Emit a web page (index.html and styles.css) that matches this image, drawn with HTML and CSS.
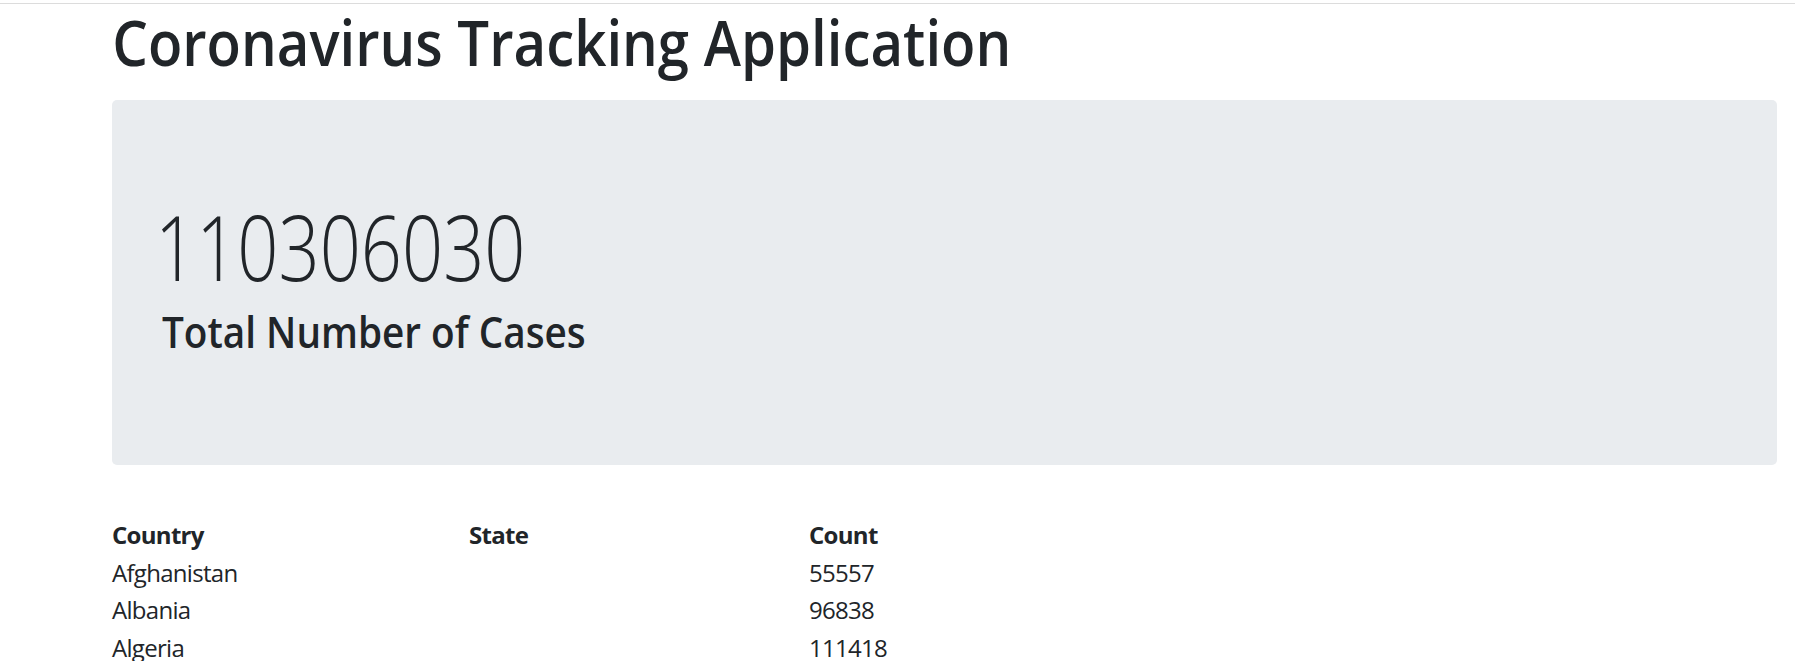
FILE: index.html
```html
<!DOCTYPE html>
<html lang="en">
<head>
<meta charset="utf-8">
<title>Coronavirus Tracking Application</title>
<link rel="stylesheet" href="styles.css">
</head>
<body>
<div class="topline"></div>
<main class="container">
  <h1 class="title">Coronavirus Tracking Application</h1>
  <section class="jumbotron">
    <div class="total">110306030</div>
    <h3 class="total-label">Total Number of Cases</h3>
  </section>
  <div class="cases">
    <div class="row head">
      <div class="cell">Country</div>
      <div class="cell">State</div>
      <div class="cell">Count</div>
    </div>
    <div class="row">
      <div class="cell">Afghanistan</div>
      <div class="cell"></div>
      <div class="cell">55557</div>
    </div>
    <div class="row">
      <div class="cell">Albania</div>
      <div class="cell"></div>
      <div class="cell">96838</div>
    </div>
    <div class="row">
      <div class="cell">Algeria</div>
      <div class="cell"></div>
      <div class="cell">111418</div>
    </div>
  </div>
</main>
</body>
</html>
```
FILE: styles.css
```css
html {
  overflow: hidden;
}
body {
  margin: 0;
  font-family: "Open Sans", "Noto Sans", sans-serif;
  color: #212529;
  background: #fff;
}
.topline {
  height: 3px;
  border-bottom: 1px solid #dcdcdc;
}
.container {
  margin: 0 18px 0 112px;
}
.title {
  margin: 0 0 19px 0;
  font-size: 64px;
  font-weight: 600;
  line-height: 76.8px;
  transform: scaleX(0.88);
  transform-origin: 2px 0;
}
.jumbotron {
  background: #e9ecef;
  border-radius: 5px;
  padding: 93.5px 50px 0 50px;
  height: 365px;
  box-sizing: border-box;
}
.total {
  margin: 0 0 5px -7px;
  font-size: 89.6px;
  font-weight: 300;
  line-height: 107.5px;
  transform: scaleX(0.805);
  transform-origin: 0 0;
}
.total-label {
  margin: 0;
  font-size: 43px;
  font-weight: 600;
  line-height: 51.6px;
  transform: scaleX(0.9);
  transform-origin: 0 0;
}
.cases {
  margin-top: 51px;
  font-size: 24px;
  line-height: 37.8px;
  letter-spacing: -0.7px;
}
.row {
  display: grid;
  grid-template-columns: 357px 340px 1fr;
}
.head {
  font-weight: 700;
}
```
